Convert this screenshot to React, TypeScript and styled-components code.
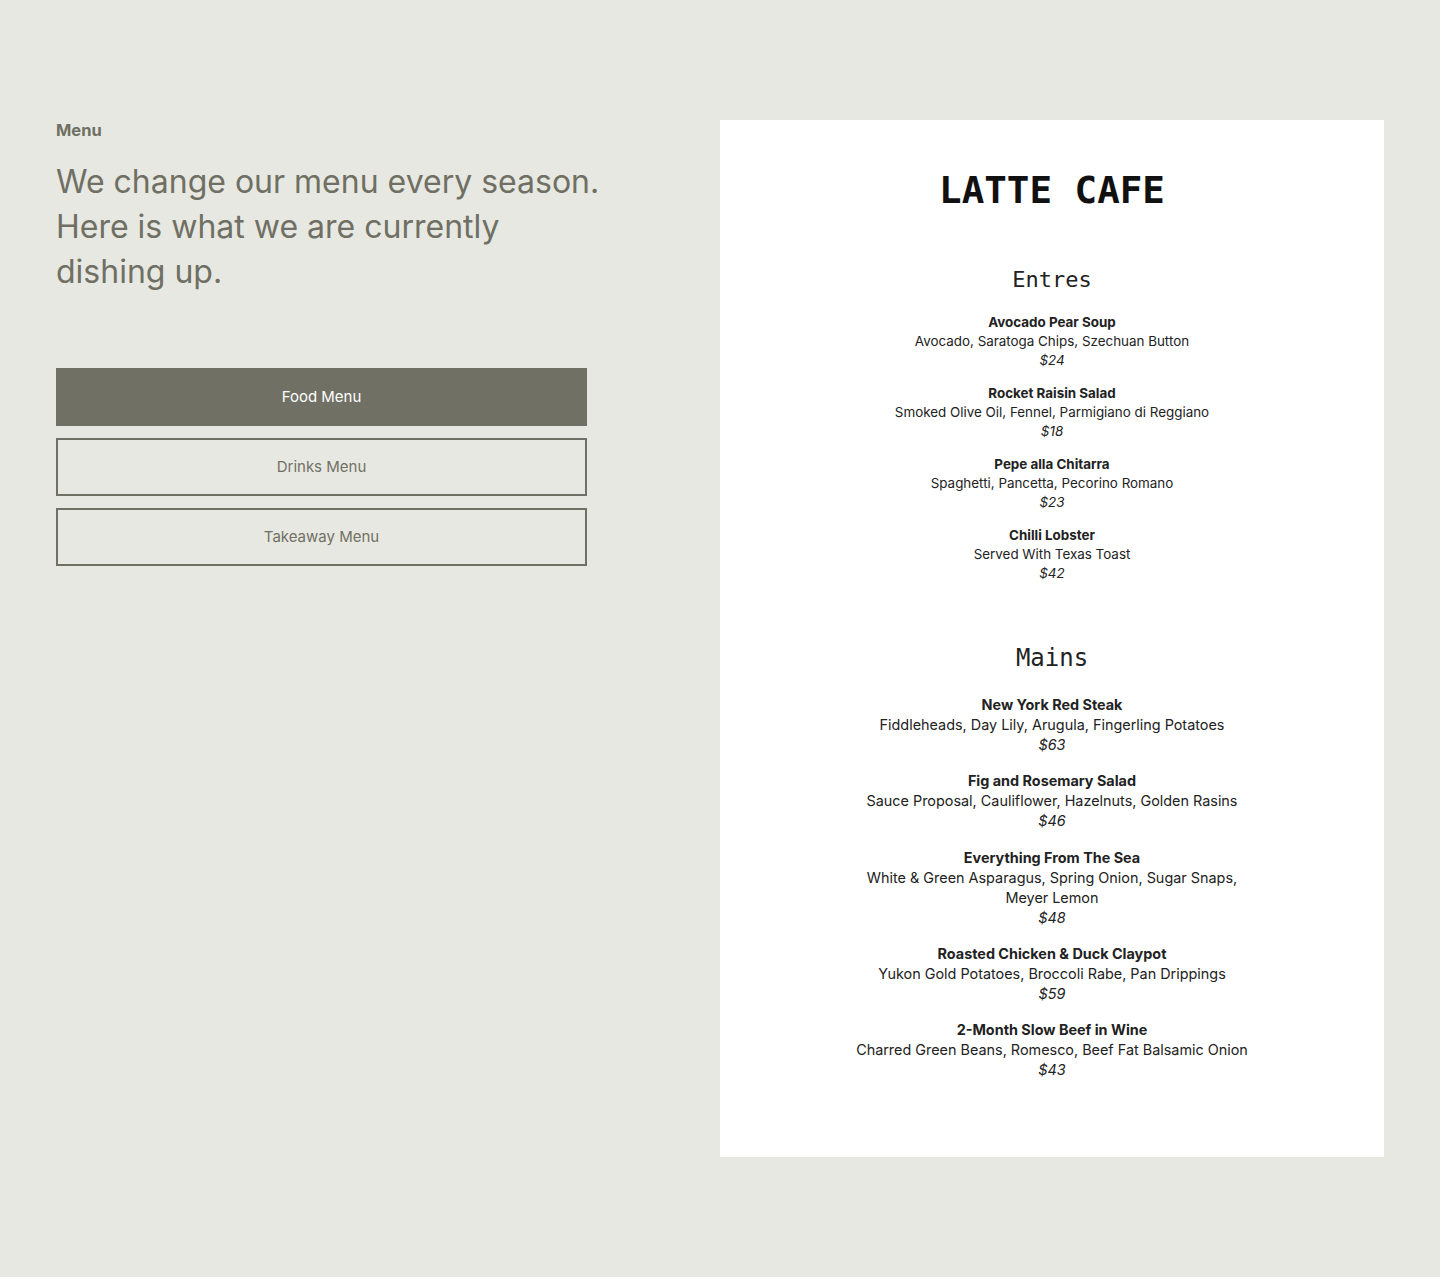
import React from 'react';
import styled, { createGlobalStyle } from 'styled-components';

type Dish = { name: string; desc: string; price: string };

const entres: Dish[] = [
  { name: 'Avocado Pear Soup', desc: 'Avocado, Saratoga Chips, Szechuan Button', price: '$24' },
  { name: 'Rocket Raisin Salad', desc: 'Smoked Olive Oil, Fennel, Parmigiano di Reggiano', price: '$18' },
  { name: 'Pepe alla Chitarra', desc: 'Spaghetti, Pancetta, Pecorino Romano', price: '$23' },
  { name: 'Chilli Lobster', desc: 'Served With Texas Toast', price: '$42' },
];

const mains: Dish[] = [
  { name: 'New York Red Steak', desc: 'Fiddleheads, Day Lily, Arugula, Fingerling Potatoes', price: '$63' },
  { name: 'Fig and Rosemary Salad', desc: 'Sauce Proposal, Cauliflower, Hazelnuts, Golden Rasins', price: '$46' },
  { name: 'Everything From The Sea', desc: 'White & Green Asparagus, Spring Onion, Sugar Snaps, Meyer Lemon', price: '$48' },
  { name: 'Roasted Chicken & Duck Claypot', desc: 'Yukon Gold Potatoes, Broccoli Rabe, Pan Drippings', price: '$59' },
  { name: '2-Month Slow Beef in Wine', desc: 'Charred Green Beans, Romesco, Beef Fat Balsamic Onion', price: '$43' },
];

const tabs = ['Food Menu', 'Drinks Menu', 'Takeaway Menu'];

const MenuSection = (props: { title: string; dishes: Dish[]; big?: boolean; top: number }) => {
  const { title, dishes, big, top } = props;
  return (
    <Section $top={top}>
      <SectionTitle $big={big}>{title}</SectionTitle>
      <DishList $big={big}>
        {dishes.map((d) => (
          <DishItem key={d.name} $big={big}>
            <DishName>{d.name}</DishName>
            <DishDesc>{d.desc}</DishDesc>
            <DishPrice>{d.price}</DishPrice>
          </DishItem>
        ))}
      </DishList>
    </Section>
  );
};

const App = () => {
  return (
    <>
      <GlobalStyle />
      <Page>
        <Intro>
          <Label>Menu</Label>
          <Lead>We change our menu every season. Here is what we are currently dishing up.</Lead>
          <Tabs>
            {tabs.map((t, i) => (
              <TabButton key={t} $active={i === 0}>
                {t}
              </TabButton>
            ))}
          </Tabs>
        </Intro>
        <Card>
          <CafeName>LATTE CAFE</CafeName>
          <MenuSection title="Entres" dishes={entres} top={60} />
          <MenuSection title="Mains" dishes={mains} big top={63} />
        </Card>
      </Page>
    </>
  );
};

const GlobalStyle = createGlobalStyle`
  body {
    margin: 0;
    background: #e8e8e2;
    font-family: Inter, "Noto Sans", sans-serif;
  }
`;

const Page = styled.div`
  display: flex;
  justify-content: space-between;
  align-items: flex-start;
  padding: 120px 56px 120px;
`;

const Intro = styled.div`
  width: 550px;
  display: flex;
  flex-direction: column;
`;

const Label = styled.div`
  font-size: 16.5px;
  line-height: 20px;
  font-weight: 700;
  color: #6f6f63;
`;

const Lead = styled.p`
  margin: 19px 0 0;
  font-size: 32px;
  line-height: 45px;
  font-weight: 400;
  color: #6f6f63;
`;

const Tabs = styled.div`
  margin-top: 74px;
  width: 531px;
  display: flex;
  flex-direction: column;
  gap: 12px;
`;

const TabButton = styled.button<{ $active?: boolean }>`
  height: 58px;
  box-sizing: border-box;
  border: 2px solid #707064;
  background: ${(p) => (p.$active ? '#707064' : 'transparent')};
  color: ${(p) => (p.$active ? '#ffffff' : '#707064')};
  font-family: Inter, sans-serif;
  font-size: 15px;
  line-height: 20px;
  padding: 0;
  font-weight: 400;
  cursor: pointer;
`;

const Card = styled.div`
  width: 664px;
  box-sizing: border-box;
  background: #ffffff;
  padding: 51px 20px 77px;
  display: flex;
  flex-direction: column;
  align-items: center;
`;

const CafeName = styled.h1`
  margin: 0;
  font-family: "DejaVu Sans Mono", "Liberation Mono", monospace;
  font-size: 37.5px;
  line-height: 38px;
  font-weight: 700;
  color: #111111;
`;

const Section = styled.section<{ $top: number }>`
  margin-top: ${(p) => p.$top}px;
  display: flex;
  flex-direction: column;
  align-items: center;
`;

const SectionTitle = styled.h2<{ $big?: boolean }>`
  margin: 0;
  font-family: "DejaVu Sans Mono", "Liberation Mono", monospace;
  font-size: ${(p) => (p.$big ? 24 : 22)}px;
  line-height: ${(p) => (p.$big ? 24 : 22)}px;
  font-weight: 400;
  color: #222222;
`;

const DishList = styled.div<{ $big?: boolean }>`
  margin-top: ${(p) => (p.$big ? 25 : 22)}px;
  display: flex;
  flex-direction: column;
  align-items: center;
  gap: ${(p) => (p.$big ? 16.3 : 14)}px;
  max-width: 400px;
`;

const DishItem = styled.div<{ $big?: boolean }>`
  text-align: center;
  color: #222222;
  font-size: ${(p) => (p.$big ? 14.4 : 13.4)}px;
  line-height: ${(p) => (p.$big ? 20 : 19)}px;
`;

const DishName = styled.div`
  font-weight: 700;
`;

const DishDesc = styled.div`
  font-weight: 400;
`;

const DishPrice = styled.div`
  font-style: italic;
`;

export default App;
